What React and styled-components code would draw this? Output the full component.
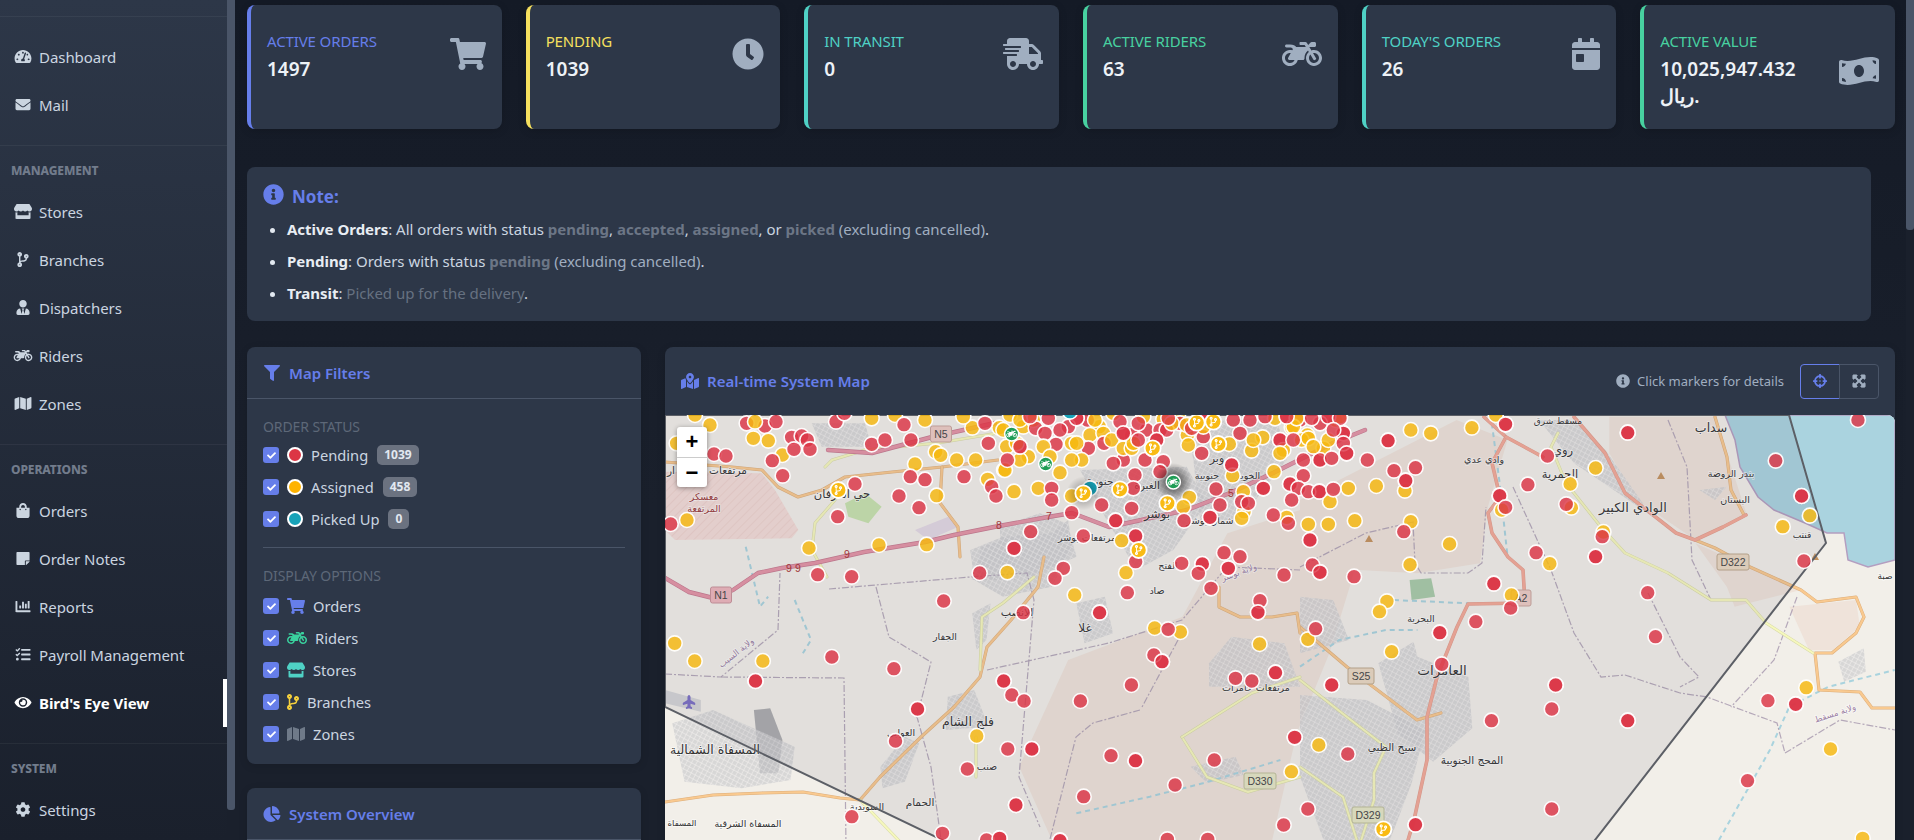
import React from 'react';
import styled, { createGlobalStyle } from 'styled-components';
import {
  FaTachometerAlt, FaEnvelope, FaStore, FaCodeBranch, FaUserTie, FaMotorcycle, FaMap, FaShoppingBag,
  FaStickyNote, FaChartBar, FaTasks, FaEye, FaCog, FaShoppingCart, FaClock, FaShippingFast,
  FaCalendarDay, FaMoneyBillWave, FaInfoCircle, FaFilter, FaChartPie, FaMapMarkedAlt, FaCrosshairs,
  FaExpandArrowsAlt, FaCheck, FaPlane,
} from 'react-icons/fa';

const UI = `"Noto Sans", "Open Sans", sans-serif`;
const AR = `"DejaVu Sans", "Noto Sans", sans-serif`;

const Global = createGlobalStyle`
  html, body { margin: 0; height: 100%; overflow: hidden; background: #161c29; }
  body { font-family: ${UI}; color: #e2e8f0; }
  * { box-sizing: border-box; }
`;

const Shell = styled.div`display: flex; height: 100vh; overflow: hidden;`;
const Sidebar = styled.nav`
  width: 227px; flex: none; height: 100%; overflow: hidden;
  background: linear-gradient(180deg, #2d3748 0%, #1a202c 100%);
`;
const SideHead = styled.div`height: 17px; border-bottom: 1px solid rgba(255,255,255,.05);`;
const Section = styled.div`
  padding: 16px 0; border-bottom: 1px solid rgba(255,255,255,.05);
  &:last-child { border-bottom: 0; }
`;
const SectionTitle = styled.div`
  height: 18px; line-height: 18px; margin-bottom: 8px; padding-left: 11px;
  font-size: 12px; font-weight: 800; color: #727c8c; text-transform: uppercase; letter-spacing: -.1px;
`;
const Item = styled.a`
  display: flex; align-items: center; height: 48px; padding-left: 13px; gap: 6px;
  font-size: 15px; letter-spacing: -.05px; color: ${p => (p.$active ? '#fff' : '#cbd5e0')};
  font-weight: ${p => (p.$active ? 700 : 400)};
  border-right: 4px solid ${p => (p.$active ? '#fff' : 'transparent')};
  svg { width: 20px; height: 15px; flex: none; position: relative; top: -1px; }
`;
const VBar = styled.div`
  width: ${p => p.$w}px; flex: none; height: 100%; background: #1a202c;
  &::before { content: ''; display: block; height: ${p => p.$thumb}px; background: #4a5568; border-radius: 0 0 3px 3px; }
`;
const Main = styled.main`flex: 1; min-width: 0; height: 100%; overflow: hidden; padding: 5px 11px 0 12px;
  background: linear-gradient(180deg, #141a26 0%, #1a202c 60%);`;
const Stats = styled.section`display: grid; grid-template-columns: repeat(6, 1fr); gap: 24px; margin-bottom: 38px;`;
const Stat = styled.div`
  background: #2d3748; border-radius: 8px; border-left: 4px solid ${p => p.$c};
  padding: 26px 16px 19px; display: flex; justify-content: space-between; gap: 8px;
  box-shadow: 0 2px 8px rgba(0,0,0,.15);
`;
const StatBody = styled.div`min-width: 0;`;
const StatLabel = styled.div`font-size: 15px; line-height: 20px; text-transform: uppercase; color: ${p => p.$c}; letter-spacing: -.12px; margin-bottom: 5px; white-space: nowrap;`;
const StatValue = styled.div`font-size: 19px; font-weight: 600; line-height: 27px; color: #edf2f7;`;
const StatIcon = styled.div`color: #a0aec0; display: flex; flex: none; align-self: ${p => (p.$tall ? 'center' : 'flex-start')}; padding-top: ${p => (p.$tall ? 0 : 7)}px;
  svg { height: 32px; width: ${p => p.$w}px; }`;

const Note = styled.section`
  margin-right: 24px; margin-bottom: 26px; height: 154px; background: #2d3748; border-radius: 8px; padding: 15px 16px;
`;
const NoteTitle = styled.div`display: flex; align-items: center; gap: 8px; height: 28px; color: #667eea; font-size: 17px; font-weight: 700; margin-bottom: 3px;
  svg { width: 21px; height: 21px; position: relative; top: -2px; }`;
const NoteList = styled.ul`margin: 0; padding: 0 0 0 24px; font-size: 15px; color: #cbd5e0;
  li { height: 32px; line-height: 32px; letter-spacing: -.02px; }
  li::marker { color: #e2e8f0; }`;
const Strong = styled.strong`color: #e8edf3; font-weight: 700;`;
const Mono = styled.span`color: #6c7686; font-weight: 700;`;
const Dim = styled.span`color: #667181;`;
const Soft = styled.span`color: #a0aec0;`;

const Columns = styled.div`display: grid; grid-template-columns: 394px 1fr; gap: 24px; align-items: start;`;
const Side = styled.div`display: flex; flex-direction: column; gap: 24px;`;
const Card = styled.div`background: #2d3748; border-radius: 8px; box-shadow: 0 2px 8px rgba(0,0,0,.12);`;
const CardHead = styled.div`
  height: 52px; padding: 0 16px; display: flex; align-items: center; gap: 8px;
  border-bottom: 1px solid #4a5568; color: #667eea; font-size: 15px; font-weight: 600;
  svg { height: 16px; width: 18px; flex: none; }
`;
const CardBody = styled.div`padding: 17px 16px 14px;`;
const GroupTitle = styled.div`font-size: 14px; color: #5d6878; text-transform: uppercase; height: 22px; line-height: 22px; margin-bottom: ${p => p.$gap}px; letter-spacing: -.1px;`;
const Row = styled.div`display: flex; align-items: center; height: 32px; gap: 8px; font-size: 14.7px; color: #cbd5e0;`;
const Check = styled.span`
  width: 16px; height: 16px; border-radius: 3px; background: #667eea; color: #fff; display: flex; align-items: center; justify-content: center; flex: none;
  svg { width: 9px; height: 9px; }
`;
const Dot = styled.span`width: 16px; height: 16px; border-radius: 50%; background: ${p => p.$c}; border: 2px solid #fff; flex: none;`;
const Badge = styled.span`height: 20px; line-height: 20px; padding: 0 7px; border-radius: 5px; background: #6b7280; color: #e2e8f0; font-size: 12px; font-weight: 700; margin-left: 1px;`;
const RowIcon = styled.span`color: ${p => p.$c}; display: flex; flex: none; svg { height: 16px; width: ${p => p.$w}px; }`;
const Sep = styled.hr`border: 0; border-top: 1px solid #4a5568; margin: 12px 0 17px;`;
const OverviewCard = styled(Card)`height: 120px;`;

const MapCard = styled(Card)`height: 500px; overflow: hidden;`;
const MapHead = styled.div`height: 68px; display: flex; align-items: center; justify-content: space-between; padding: 0 16px;`;
const MapTitle = styled.div`display: flex; align-items: center; gap: 8px; color: #667eea; font-size: 15px; font-weight: 600;
  svg { height: 16px; width: 18px; }`;
const MapTools = styled.div`display: flex; align-items: center; gap: 16px; color: #a0aec0; font-size: 13px;`;
const Hint = styled.div`display: flex; align-items: center; gap: 7px; svg { width: 14px; height: 14px; }`;
const BtnGroup = styled.div`display: flex;`;
const ToolBtn = styled.button`
  width: 40px; height: 35px; background: transparent; display: flex; align-items: center; justify-content: center; padding: 0;
  border: 1px solid ${p => (p.$on ? '#667eea' : '#4a5568')}; color: ${p => (p.$on ? '#667eea' : '#a0aec0')};
  border-radius: ${p => (p.$on ? '4px 0 0 4px' : '0 4px 4px 0')};
  margin-left: ${p => (p.$on ? 0 : -1)}px;
  svg { width: 14px; height: 14px; stroke: currentColor; stroke-width: ${p => (p.$on ? 0 : 30)}; }
`;
const MapArea = styled.div`position: relative; height: 432px; background: #e8e6e3; overflow: hidden; border-radius: 0 8px 0 0;`;
const MapSvg = styled.svg`display: block; width: 1230px; height: 432px;`;
const Zoom = styled.div`position: absolute; left: 12px; top: 12px; width: 30px; background: #fff; border-radius: 3px; box-shadow: 0 1px 5px rgba(0,0,0,.4); overflow: hidden;`;
const ZoomBtn = styled.div`height: 30px; display: flex; align-items: center; justify-content: center; font: 700 22px/30px "Liberation Sans", sans-serif; color: #000;
  & + & { border-top: 1px solid #ccc; }`;

const Road = styled.polyline`fill: none; stroke-linejoin: round; stroke-linecap: round; stroke: ${p => p.$c}; stroke-width: ${p => p.$w};`;
const Border = styled.polyline`fill: none; stroke: #a99bb0; stroke-width: 1.2; stroke-dasharray: 7 2 2 2; opacity: .85;`;
const River = styled.polyline`fill: none; stroke: #a9d3de; stroke-width: 2; stroke-dasharray: 5 4;`;
const Label = styled.text`font-family: ${AR}; font-size: ${p => p.$s || 9.5}px; fill: ${p => p.$c || '#333'}; text-anchor: middle; paint-order: stroke; stroke: rgba(255,255,255,.6); stroke-width: 1.6px;`;
const Num = styled.text`font-family: "Liberation Sans", sans-serif; font-size: 10.5px; fill: ${p => p.$c || '#a33'}; text-anchor: middle;`;
const Shield = styled.rect`fill: ${p => p.$c}; stroke: ${p => p.$b}; stroke-width: 1;`;
const ShieldText = styled.text`font-family: "Liberation Sans", sans-serif; font-size: 10.5px; fill: #444; text-anchor: middle;`;

const nav = [
  [null, [[FaTachometerAlt, 'Dashboard'], [FaEnvelope, 'Mail']]],
  ['Management', [[FaStore, 'Stores'], [FaCodeBranch, 'Branches'], [FaUserTie, 'Dispatchers'], [FaMotorcycle, 'Riders'], [FaMap, 'Zones']]],
  ['Operations', [[FaShoppingBag, 'Orders'], [FaStickyNote, 'Order Notes'], [FaChartBar, 'Reports'], [FaTasks, 'Payroll Management'], [FaEye, "Bird's Eye View", true]]],
  ['System', [[FaCog, 'Settings']]],
];
const stats = [
  ['Active Orders', '1497', '#667eea', FaShoppingCart, 36],
  ['Pending', '1039', '#f6e05e', FaClock, 32],
  ['In Transit', '0', '#4fd1c5', FaShippingFast, 40],
  ['Active Riders', '63', '#48d1a0', FaMotorcycle, 40],
  ["Today's Orders", '26', '#4fd1c5', FaCalendarDay, 28],
  ['Active Value', '10,025,947.432 ريال.', '#48d1a0', FaMoneyBillWave, 40, true],
];
const displayRows = [
  [FaShoppingCart, '#667eea', 18, 'Orders'],
  [FaMotorcycle, '#3ad29f', 20, 'Riders'],
  [FaStore, '#4fd1c5', 18, 'Stores'],
  [FaCodeBranch, '#f6d13c', 12, 'Branches'],
  [FaMap, '#6f7a89', 18, 'Zones'],
];
const statusRows = [
  ['#dc3545', 'Pending', '1039'],
  ['#ffb300', 'Assigned', '458'],
  ['#17a2b8', 'Picked Up', '0'],
];

const z7 = p => p.map(([x, y]) => [x / 3, y / 3 - 5]);
const z8 = p => p.map(([x, y]) => [x / 3 + 335, y / 3 - 5]);
const z5 = p => p.map(([x, y]) => [x / 2.45 - 5, y / 3 - 15]);
const z6 = p => p.map(([x, y]) => [x / 2.554 + 635, y / 3 - 15]);

const reds = [
  ...z7([[245,40],[300,48],[333,35],[147,132],[183,138],[380,82],[410,78],[427,90],[387,118],[435,118],[322,152],[353,197],[513,35],[538,10],[620,103],[660,90],[717,44],[738,90],[570,222],[518,320],[702,258],[762,293],[736,200],[780,209],[897,200],[970,100],[960,40],[980,230],[993,258],[17,342],[458,494],[560,500],[944,489]]),
  ...z8([[107,55],[135,70],[168,103],[145,25],[22,150],[262,30],[265,115],[312,100],[370,150],[340,160],[395,75],[440,60],[480,60],[500,60],[540,40],[610,80],[605,130],[435,150],[490,155],[480,185],[405,195],[400,235],[155,235],[155,270],[305,285],[215,308],[395,295],[347,332],[250,378],[92,365],[42,415],[190,475],[165,505],[407,378],[407,455],[545,460],[607,462],[595,490],[552,332],[630,322],[660,285],[648,237],[695,165],[720,70],[700,30],[840,90],[900,30],[960,40],[1030,70],[1030,100],[910,150],[960,150],[995,145],[910,197],[870,222],[895,235],[925,245],[958,245],[1000,238],[875,270],[790,235],[820,315],[865,340],[930,390],[672,428],[720,440],[685,475],[852,495],[937,465],[960,487],[725,275],[745,280],
    [60,110],[90,20],[205,50],[230,25],[180,60],[360,35],[370,70],[415,90],[415,40],[470,90],[505,25],[575,55],[620,20],[750,30],[795,20],[860,20],[880,90],[935,25],[985,20],[1020,25],[1000,60],[1040,130]]),
  ...z5([[695,603],[890,638],[1077,638],[1245,688],[1210,765],[1230,785],[1155,855],[1030,903],[842,843],[862,885],[892,903],[631,927],[577,1023],[852,1047],[911,1047],[753,1107],[1105,1067],[1165,1082],[1262,1155],[1038,1190],[872,1215],[692,1300],[800,1320],[832,1315],[1243,1318],[1342,1318],[980,1322],[1528,1275],[1358,1080],[1555,1012],[1410,835],[1450,843],[1508,818],[421,771],[573,806],[234,843],[470,1250],[1470,602],[1465,637],[1350,565],[1145,578]]),
  ...z6([[225,122],[295,203],[240,212],[270,242],[172,180],[138,530],[525,73],[632,168],[582,254],[510,287],[525,322],[680,313],[837,98],[1215,182],[1425,60],[1281,288],[1287,483],[603,458],[755,470],[772,410],[265,395],[495,551],[538,624],[449,665],[357,698],[362,793],[40,686],[81,855],[122,1062],[20,1227],[295,1274],[888,578],[908,710],[653,855],[643,927],[489,962],[837,962],[643,1227],[1195,902],[1266,913],[1143,1142]]),
];
const yellows = [
  ...z7([[90,15],[135,45],[270,35],[265,85],[310,92],[35,100],[352,135],[620,25],[690,15],[780,30],[812,125],[827,136],[875,150],[932,150],[750,162],[815,257],[922,53],[895,20],[1003,53],[968,208],[1017,180],[66,330],[432,414],[642,405],[785,404]]),
  ...z8([[30,15],[70,50],[100,30],[20,110],[85,140],[15,180],[60,150],[180,188],[115,235],[42,245],[215,258],[298,50],[270,75],[310,70],[215,100],[245,150],[215,150],[490,28],[535,10],[562,75],[565,105],[688,102],[755,122],[788,82],[825,25],[875,52],[922,75],[850,120],[905,90],[925,85],[970,115],[1007,30],[822,185],[698,197],[730,245],[732,305],[725,325],[568,262],[550,290],[365,392],[378,488],[22,487],[990,275],[860,322],[925,343],[985,343],[1045,235],[340,10],
    [50,100],[10,60],[130,110],[150,140],[60,30],[230,100],[285,30],[335,90],[370,115],[395,115],[400,100],[430,20],[515,40],[560,45],[610,50],[760,90],[840,130],[880,50],[890,25],[940,110],[985,90],[1020,20]]),
  ...z5([[36,730],[85,783],[252,783],[776,1008],[1212,684],[1275,696],[1469,732],[1547,1115],[1016,585]]),
  ...z6([[283,90],[334,100],[439,83],[195,258],[268,272],[140,362],[283,365],[382,432],[281,494],[222,604],[203,635],[20,718],[48,1035],[234,755],[540,585],[515,330],[693,323],[690,252],[755,204],[775,396],[638,491],[1233,380],[1302,347],[1293,863],[1355,1047],[1437,1315],[500,45]]),
];
const markers = [];
for (let i = 0; i < Math.max(reds.length, yellows.length); i++) {
  if (reds[i]) markers.push([...reds[i], '#dc3545']);
  if (i % 3 === 0 && reds[i + 60]) markers.push([...reds[i + 60], '#dc3545']);
  if (yellows[i]) markers.push([...yellows[i], '#f6b80f']);
}
const branches = [...z7([[520,240]]), ...z8([[250,250],[360,238],[590,38],[640,35],[458,115],[655,102],[502,280],[416,420]]), ...z6([[213,1288]])];
const riders = z8([[35,72],[137,162],[520,216]]);
const teal = z8([[270,235],[210,5]]);

const pts = a => a.map(p => p.join(',')).join(' ');
const urban = [
  z5([[760,450],[840,410],[960,400],[1000,360],[1010,440],[960,560],[840,590],[770,540]]),
  z5([[1020,610],[1090,590],[1110,700],[1040,730]]),
  z5([[765,640],[810,610],[800,720],[775,750]]),
  z5([[705,890],[770,870],[805,980],[700,990]]),
  z5([[30,970],[130,930],[330,1040],[320,1140],[200,1165],[60,1145]]),
  z5([[1345,790],[1400,710],[1530,730],[1568,860],[1345,860]]),
  z5([[1300,1100],[1410,1070],[1430,1125],[1340,1150]]),
  z5([[540,1100],[600,1010],[635,1030],[600,1145],[545,1165]]),
  z7([[950,410],[1050,380],[1050,510],[920,510]]),
  z8([[0,350],[120,310],[200,340],[230,440],[90,500],[0,480]]),
  z8([[240,180],[560,170],[620,280],[520,420],[410,480],[320,330]]),
  z8([[560,40],[830,20],[860,150],[720,330],[600,330],[580,150]]),
  z7([[440,40],[600,40],[620,110],[470,110]]),
  z6([[0,590],[85,600],[125,720],[0,760]]),
  z6([[200,790],[290,725],[300,770],[430,830],[440,985],[340,1085],[250,1000]]),
  z6([[0,885],[170,900],[320,990],[285,1150],[230,1320],[60,1320],[0,1130]]),
  z6([[610,60],[700,60],[780,150],[900,350],[820,285],[700,190]]),
  z6([[1020,270],[1090,260],[1060,300]]),
  z6([[1375,785],[1440,745],[1445,815],[1390,845]]),
];
const tan = [
  z5([[1000,780],[1280,650],[1390,400],[1568,330],[1700,520],[1640,760],[1560,1000],[1500,1320],[960,1320],[880,1100]]),
  z6([[0,500],[300,520],[460,490],[480,320],[530,120],[400,60],[0,300]]),
  z6([[790,50],[1060,50],[1140,340],[1010,420],[860,300],[790,160]]),
  z6([[1010,430],[1280,570],[1110,620],[1090,560]]),
  z6([[1250,620],[1420,600],[1430,680],[1360,750],[1300,750]]),
];
const labels = [
  ['مرتفعات', 63, 59, 10.5], ['ار', 6, 59, 10.5], ['حي العرفان', 177, 83, 11.5], ['الجفار', 280, 225], ['غلا', 420, 217, 12], ['الانصب', 352, 201, 11],
  ['صاد', 492, 179], ['فلج الشام', 303, 311, 12.5], ['العوابي', 236, 321], ['صنب', 322, 355], ['المسفاة الشمالية', 50, 339, 12.5],
  ['الحمام', 255, 391, 10.5], ['السويدية', 202, 395], ['المسفاة الشرقية', 83, 412], ['المسفاة', 17, 411, 8.5], ['مرتفعات حامرات', 591, 276],
  ['بوشر', 492, 103, 12], ['مرتفعات بوشر', 422, 126], ['جنوبية', 542, 64], ['وبر', 552, 47, 11], ['الفتح', 503, 154], ['الخوير', 583, 64],
  ['شمال بوشر', 545, 109], ['جنوبية', 435, 70, 10.5], ['الغبرة', 482, 74, 10.5], ['سداب', 1046, 17, 12.5], ['روي', 898, 39, 11.5],
  ['وادي عدي', 819, 48], ['الحمرية', 895, 63, 11.5], ['بندر الروضة', 1066, 62], ['البستان', 1070, 88], ['الوادي الكبير', 968, 97, 13],
  ['قنتب', 1137, 123, 9], ['البحرية', 756, 207], ['العامرات', 777, 260, 13.5], ['سيح الظبي', 727, 336, 10.5], ['المحج الجنوبية', 807, 349, 10.5],
  ['مسقط شرق', 893, 9, 9], ['صبة', 1220, 164, 9],
];

const App = () => (
  <>
    <Global />
    <Shell>
      <Sidebar>
        <SideHead />
        {nav.map(([title, items], i) => (
          <Section key={i}>
            {title && <SectionTitle>{title}</SectionTitle>}
            {items.map(([Icon, text, active]) => (
              <Item key={text} $active={active}><Icon />{text}</Item>
            ))}
          </Section>
        ))}
      </Sidebar>
      <VBar $w={8} $thumb={810} />
      <Main>
        <Stats>
          {stats.map(([label, value, c, Icon, w, tall]) => (
            <Stat key={label} $c={c}>
              <StatBody>
                <StatLabel $c={c}>{label}</StatLabel>
                <StatValue>{value}</StatValue>
              </StatBody>
              <StatIcon $tall={tall} $w={w}><Icon /></StatIcon>
            </Stat>
          ))}
        </Stats>
        <Note>
          <NoteTitle><FaInfoCircle />Note:</NoteTitle>
          <NoteList>
            <li><Strong>Active Orders</Strong>: All orders with status <Mono>pending</Mono>, <Mono>accepted</Mono>, <Mono>assigned</Mono>, or <Mono>picked</Mono> <Soft>(excluding cancelled)</Soft>.</li>
            <li><Strong>Pending</Strong>: Orders with status <Mono>pending</Mono> <Soft>(excluding cancelled)</Soft>.</li>
            <li><Strong>Transit</Strong>: <Dim>Picked up for the delivery</Dim>.</li>
          </NoteList>
        </Note>
        <Columns>
          <Side>
            <Card>
              <CardHead><FaFilter />Map Filters</CardHead>
              <CardBody>
                <GroupTitle $gap={1}>Order Status</GroupTitle>
                {statusRows.map(([c, text, n]) => (
                  <Row key={text}><Check><FaCheck /></Check><Dot $c={c} />{text}<Badge>{n}</Badge></Row>
                ))}
                <Sep />
                <GroupTitle $gap={3}>Display Options</GroupTitle>
                {displayRows.map(([Icon, c, w, text]) => (
                  <Row key={text}><Check><FaCheck /></Check><RowIcon $c={c} $w={w}><Icon /></RowIcon>{text}</Row>
                ))}
              </CardBody>
            </Card>
            <OverviewCard>
              <CardHead><FaChartPie />System Overview</CardHead>
            </OverviewCard>
          </Side>
          <MapCard>
            <MapHead>
              <MapTitle><FaMapMarkedAlt />Real-time System Map</MapTitle>
              <MapTools>
                <Hint><FaInfoCircle />Click markers for details</Hint>
                <BtnGroup>
                  <ToolBtn $on><FaCrosshairs /></ToolBtn>
                  <ToolBtn><FaExpandArrowsAlt /></ToolBtn>
                </BtnGroup>
              </MapTools>
            </MapHead>
            <MapArea>
              <MapSvg viewBox="0 0 1230 432">
                <defs>
                  <pattern id="urbanTex" width="4.5" height="4.5" patternUnits="userSpaceOnUse" patternTransform="rotate(28)">
                    <rect width="4.5" height="4.5" fill="#cdcdcf" />
                    <path d="M0 2.2H4.5M2.2 0V4.5" stroke="#eeedec" strokeWidth=".6" />
                  </pattern>
                  <pattern id="hatch" width="6" height="6" patternUnits="userSpaceOnUse" patternTransform="rotate(45)">
                    <rect width="6" height="6" fill="#f3dcd7" />
                    <path d="M0 0V6" stroke="#eac9c3" strokeWidth="1" />
                  </pattern>
                  <radialGradient id="halo">
                    <stop offset="0" stopColor="#000" stopOpacity=".75" />
                    <stop offset="1" stopColor="#000" stopOpacity="0" />
                  </radialGradient>
                </defs>
                <rect width="1230" height="432" fill="#f2efe9" />
                {tan.map((p, i) => <polygon key={i} points={pts(p)} fill="#efe3da" />)}
                <polygon points={pts(z7([[0,185],[290,190],[330,240],[400,360],[380,385],[30,390],[0,360]]))} fill="url(#hatch)" />
                <polygon points={pts(z7([[540,280],[600,250],[650,290],[610,340],[550,320]]))} fill="#c8e3ae" />
                <polygon points={pts(z7([[750,360],[850,320],[880,350],[790,390]]))} fill="#e3d8e4" />
                <polygon points={pts(z5([[12,870],[100,900],[100,935],[12,910]]))} fill="#d4d4d6" />
                <polygon points={pts(z5([[230,930],[270,925],[300,1020],[290,1120],[245,1120]]))} fill="#acacae" />
                <polygon points={pts(z6([[280,540],[335,535],[345,590],[285,600]]))} fill="#a9cba9" />
                {urban.map((p, i) => <polygon key={i} points={pts(p)} fill="url(#urbanTex)" opacity=".72" />)}
                <polygon points="1060,0 1070,25 1075,52 1093,82 1109,95 1140,108 1162,118 1179,118 1183,145 1203,152 1230,145 1230,0" fill="#aad3df" stroke="#b49ec0" strokeWidth="1.5" />

                <River points={pts(z5([[210,440],[245,620],[265,590]]))} />
                <River points={pts(z5([[330,600],[370,720],[350,760]]))} />
                <River points={pts(z5([[1020,1240],[1200,1190],[1330,1150],[1520,1080]]))} />
                <River points={pts(z6([[240,600],[430,610]]))} />
                <River points={pts(z6([[0,800],[100,720],[220,690],[300,690]]))} />
                <River points={pts(z6([[1070,1320],[1200,1050],[1250,920],[1350,860],[1519,810]]))} />
                <River points={pts(z6([[490,70],[510,250],[530,470]]))} />

                {[
                  [[0,259],[56,262],[113,215],[115,158]],
                  [[56,262],[179,263],[181,432]],
                  [[164,174],[305,162],[362,158],[369,185],[354,362],[375,412]],
                  [[211,172],[224,222],[266,247],[252,302],[266,352],[277,432]],
                  [[322,255],[444,228],[517,205],[562,152],[635,155]],
                  [[475,295],[428,308],[411,322],[383,432]],
                  [[513,225],[477,292]],
                  [[848,72],[886,155],[909,218],[936,262],[960,260],[1015,278],[1042,282],[1112,308],[1120,338]],
                  [[1003,5],[1022,52],[1027,145],[1046,185]],
                  [[983,178],[1015,242],[1034,262],[1015,272]],
                  [[635,152],[701,118],[748,107],[750,148],[756,158],[803,158],[817,148],[821,92]],
                  [[1120,338],[1175,305],[1230,315]],
                  [[1132,182],[1109,245],[1066,292]],
                ].map((p, i) => <Border key={i} points={pts(p)} />)}

                {[
                  [[0,47],[67,52],[97,55],[113,72],[133,82],[157,75],[180,62],[227,57],[277,52],[333,45]],
                  [[379,142],[373,172],[346,205],[322,232],[315,262],[289,292],[256,322],[215,362],[195,385]],
                  [[0,387],[48,380],[97,378],[138,377],[175,383],[195,385]],
                  [[277,52],[275,88],[293,112],[295,142]],
                  [[1050,2],[1062,42],[1066,75],[1079,100]],
                  [[1030,125],[1050,133],[1085,152],[1136,175],[1152,187],[1191,182],[1199,202],[1191,218],[1167,238],[1150,238],[1154,275],[1195,277],[1207,293],[1230,293]],
                  [[635,212],[682,252],[752,305],[776,298]],
                  [[554,172],[554,192],[575,202],[607,202],[632,198],[635,218]],
                ].map((p, i) => (
                  <g key={i}><Road points={pts(p)} $c="#dcae7c" $w={3.2} /><Road points={pts(p)} $c="#f9c98f" $w={2.2} /></g>
                ))}
                {[
                  [[369,162],[338,188],[317,202],[315,255]],
                  [[195,385],[240,432]],
                  [[311,322],[311,362]],
                  [[160,52],[167,45],[200,35],[273,28],[333,18]],
                  [[147,135],[150,108],[170,85]],
                  [[162,162],[147,135]],
                  [[893,18],[886,32],[901,68],[936,112],[960,138],[1003,158],[1046,185],[1081,185],[1101,208],[1148,238]],
                  [[635,265],[682,302],[721,332],[709,358],[709,385],[694,432]],
                  [[635,352],[678,382],[694,432]],
                  [[517,322],[542,362],[583,377],[635,362]],
                  [[517,322],[587,278],[635,262]],
                ].map((p, i) => (
                  <g key={i}><Road points={pts(p)} $c="#d8daa8" $w={3} /><Road points={pts(p)} $c="#f6f8bd" $w={2} /></g>
                ))}
                {[
                  [[819,2],[841,22],[827,48],[835,82],[823,98],[827,118],[843,142],[858,155],[860,188],[803,189],[792,212],[772,262],[762,302],[762,345],[749,405],[741,432]],
                  [[841,22],[878,42]],
                  [[909,2],[940,38],[960,78],[1011,118],[1030,125],[1058,112],[1081,100]],
                ].map((p, i) => (
                  <g key={i}><Road points={pts(p)} $c="#e09d8d" $w={3.6} /><Road points={pts(p)} $c="#f4aa98" $w={2.6} /></g>
                ))}
                {[
                  [[0,163],[24,177],[48,183],[68,175],[93,158],[117,153],[150,148],[199,137],[260,127],[289,120],[334,111],[383,102],[407,98],[444,112],[522,95],[565,78],[608,58],[668,28],[700,15]],
                  [[163,35],[207,38],[267,22],[330,8]],
                ].map((p, i) => (
                  <g key={i}><Road points={pts(p)} $c="#c77a90" $w={4.4} /><Road points={pts(p)} $c="#e595a6" $w={3.2} /></g>
                ))}
                <Num x="182" y="143">9</Num><Num x="124" y="157">9</Num><Num x="133" y="157">9</Num>
                <Num x="334" y="114">8</Num><Num x="384" y="105">7</Num><Num x="566" y="82">5</Num>

                {[
                  [56, 180, 'N1', 21, '#eeb6bd', '#c9929a'], [276, 19, 'N5', 21, '#eeccc4', '#c9a59d'],
                  [696, 261, 'S25', 26, '#ead9c2', '#bda88c'], [1068, 147, 'D322', 32, '#ead9c2', '#bda88c'],
                  [595, 366, 'D330', 32, '#e6e7c6', '#bebf99'], [703, 400, 'D329', 32, '#e6e7c6', '#bebf99'],
                  [856, 183, 'A2', 20, '#eeccc4', '#c9a59d'],
                ].map(([x, y, t, w, c, b]) => (
                  <g key={t}>
                    <Shield x={x - w / 2} y={y - 8} width={w} height={16} rx="2" $c={c} $b={b} />
                    <ShieldText x={x} y={y + 4}>{t}</ShieldText>
                  </g>
                ))}

                {[[996,61],[704,124],[1150,142]].map(([x, y]) => <polygon key={x} points={`${x - 4},${y + 3} ${x + 4},${y + 3} ${x},${y - 4}`} fill="#c5925e" />)}
                <g transform="rotate(-90 24 287)"><FaPlane x="17" y="280" size="14" color="#7b6fc4" /></g>

                {labels.map(([t, x, y, s]) => <Label key={t + x} x={x} y={y} $s={s}>{t}</Label>)}
                <Label x="39" y="85" $s={9.5} $c="#9a3b3b">معسكر</Label>
                <Label x="39" y="97" $s={9.5} $c="#9a3b3b">المرتفعة</Label>
                <Label x="73" y="240" $s={8.5} $c="#9b7fa3" transform="rotate(-38 73 240)">ولاية السيب</Label>
                <Label x="1171" y="301" $s={8.5} $c="#9b7fa3" transform="rotate(-18 1171 301)">ولاية مسقط</Label>
                <Label x="575" y="160" $s={8.5} $c="#9b7fa3" transform="rotate(-20 575 160)">ولاية بوشر</Label>

                <polygon points="0,292 296,434 923,434 1161,128 1124,0 0,0" fill="rgba(90,90,110,.1)" stroke="#5c5f66" strokeWidth="2" strokeLinejoin="round" />

                {markers.map(([x, y, c], i) => <circle key={i} cx={x} cy={y} r="7.5" fill={c} fillOpacity=".82" stroke="#fff" strokeOpacity=".95" strokeWidth="1.6" />)}
                {teal.map(([x, y]) => <circle key={x} cx={x} cy={y} r="7.5" fill="#17a2b8" stroke="#fff" strokeWidth="1.6" />)}
                <circle cx={branches[1][0]} cy={branches[1][1]} r="17" fill="url(#halo)" opacity=".5" />
                <circle cx={riders[2][0]} cy={riders[2][1]} r="19" fill="url(#halo)" />
                {branches.map(([x, y]) => (
                  <g key={x}>
                    <circle cx={x} cy={y} r="8" fill="#f9bb14" stroke="#fff" strokeWidth="1.8" />
                    <FaCodeBranch x={x - 5} y={y - 5} size="10" color="#fff" />
                  </g>
                ))}
                {riders.map(([x, y]) => (
                  <g key={x}>
                    <circle cx={x} cy={y} r="7" fill="#1f9d55" stroke="#fff" strokeWidth="1.6" />
                    <FaMotorcycle x={x - 5.5} y={y - 5.5} size="11" color="#fff" />
                  </g>
                ))}
              </MapSvg>
              <Zoom>
                <ZoomBtn>+</ZoomBtn>
                <ZoomBtn>−</ZoomBtn>
              </Zoom>
            </MapArea>
          </MapCard>
        </Columns>
      </Main>
      <VBar $w={8} $thumb={230} />
    </Shell>
  </>
);

export default App;
